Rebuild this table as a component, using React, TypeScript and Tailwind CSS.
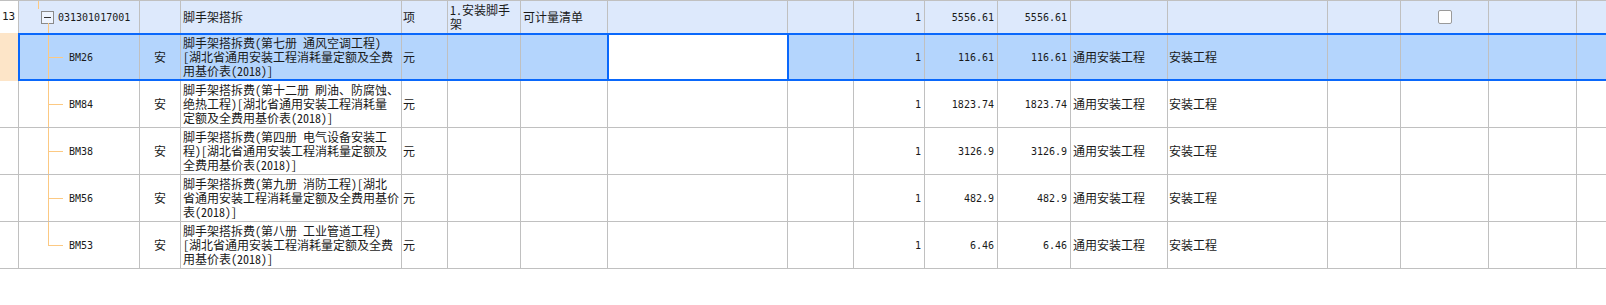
import React from 'react';

// column templates: normal rows / the selected (framed) row
const COLS =
  'grid grid-cols-[19px_121px_41px_221px_46px_73px_87px_180px_66px_71px_73px_73px_97px_160px_73px_88px_88px_1fr]';
const SEL_COLS =
  'grid grid-cols-[120px_41px_221px_46px_73px_86px_182px_65px_71px_73px_73px_97px_160px_73px_88px_88px_1fr]';

const line = 'border-r border-[#c0c0c0]';
const mono = "font-['DejaVu_Sans_Mono',monospace] text-[10px]";
const tree = 'bg-[#fcc983]';

interface Item {
  code: string;
  lines: string[];
  price: string;
}

const items: Item[] = [
  {
    code: 'BM26',
    lines: ['脚手架搭拆费(第七册 通风空调工程)', '[湖北省通用安装工程消耗量定额及全费', '用基价表(2018)]'],
    price: '116.61',
  },
  {
    code: 'BM84',
    lines: ['脚手架搭拆费(第十二册 刷油、防腐蚀、', '绝热工程)[湖北省通用安装工程消耗量', '定额及全费用基价表(2018)]'],
    price: '1823.74',
  },
  {
    code: 'BM38',
    lines: ['脚手架搭拆费(第四册 电气设备安装工', '程)[湖北省通用安装工程消耗量定额及', '全费用基价表(2018)]'],
    price: '3126.9',
  },
  {
    code: 'BM56',
    lines: ['脚手架搭拆费(第九册 消防工程)[湖北', '省通用安装工程消耗量定额及全费用基价', '表(2018)]'],
    price: '482.9',
  },
  {
    code: 'BM53',
    lines: ['脚手架搭拆费(第八册 工业管道工程)', '[湖北省通用安装工程消耗量定额及全费', '用基价表(2018)]'],
    price: '6.46',
  },
];

const Name = ({ lines }: { lines: string[] }) => (
  <div className={`${line} flex flex-col justify-center pl-[2px] leading-[14px] whitespace-nowrap overflow-hidden`}>
    {lines.map((l, i) => (
      <span key={i}>{l}</span>
    ))}
  </div>
);

const Num = ({ v }: { v: string }) => (
  <div className={`${line} ${mono} flex items-center justify-end pr-[3px]`}>{v}</div>
);

const Txt = ({ v, pl = 'pl-[2px]' }: { v?: string; pl?: string }) => (
  <div className={`${line} flex items-center ${pl} whitespace-nowrap`}>{v}</div>
);

// code cell of a child row, with the tree connector drawn in
const Code = ({ code, last, offset }: { code: string; last: boolean; offset: number }) => (
  <div className={`${line} relative flex items-center`} style={{ paddingLeft: 50 - offset }}>
    <span
      className={`absolute top-0 w-px ${tree} ${last ? 'h-1/2' : 'bottom-0'}`}
      style={{ left: 29 - offset }}
    />
    <span className={`absolute top-1/2 h-px w-[15px] ${tree}`} style={{ left: 29 - offset }} />
    <span className={mono}>{code}</span>
  </div>
);

export default function App() {
  return (
    <div className="w-[1606px] h-[305px] bg-white text-[12px] text-[#1a1a1a] font-['Noto_Sans_Mono_CJK_SC','Noto_Sans_CJK_SC','Noto_Sans_CJK_JP',sans-serif] overflow-hidden">
      {/* row 13: the parent item */}
      <div className={`${COLS} h-[33px] border-t border-[#c0c0c0] bg-[#dde9fc]`}>
        <div className={`${line} ${mono} bg-white flex items-center pl-[2px] text-[11px]`}>13</div>
        <div className={`${line} relative flex items-center pl-[22px]`}>
          <span className={`absolute left-[19px] top-0 h-[8px] w-px ${tree}`} />
          <span className={`absolute left-[29px] top-[22px] bottom-0 w-px ${tree}`} />
          <span className="w-[13px] h-[13px] border border-[#8a8a8a] bg-[#eef4fe] flex items-center justify-center">
            <span className="w-[7px] h-px bg-[#333]" />
          </span>
          <span className={`${mono} ml-[4px]`}>031301017001</span>
        </div>
        <Txt />
        <Txt v="脚手架搭拆" />
        <Txt v="项" pl="pl-[1px]" />
        <div className={`${line} flex flex-col justify-center pl-[2px] leading-[14px] whitespace-nowrap`}>
          <span>1.安装脚手</span>
          <span>架</span>
        </div>
        <Txt v="可计量清单" />
        <Txt />
        <Txt />
        <Num v="1" />
        <Num v="5556.61" />
        <Num v="5556.61" />
        <Txt />
        <Txt />
        <Txt />
        <div className={`${line} flex items-center justify-center`}>
          <span className="w-[14px] h-[14px] rounded-[2px] border border-[#9a9a9a] bg-white" />
        </div>
        <Txt />
        <div />
      </div>

      {/* selected row */}
      <div className="flex h-[48px]">
        <div className="w-[18px] bg-[#fde5c8]" />
        <div className="flex-1 border-2 border-r-0 border-[#0a68fb] bg-[#b4d5fd]">
          <div className={`${SEL_COLS} h-full`}>
            <Code code={items[0].code} last={false} offset={1} />
            <div className={`${line} flex items-center justify-center`}>安</div>
            <Name lines={items[0].lines} />
            <Txt v="元" pl="pl-[1px]" />
            <Txt />
            <div className="flex items-center pl-[2px]" />
            <div className="border-x-2 border-[#0a68fb] bg-white" />
            <Txt />
            <Num v="1" />
            <Num v={items[0].price} />
            <Num v={items[0].price} />
            <Txt v="通用安装工程" />
            <Txt v="安装工程" pl="pl-[1px]" />
            <Txt />
            <Txt />
            <Txt />
            <div />
          </div>
        </div>
      </div>

      {items.slice(1).map((it, idx) => (
        <div key={it.code} className={`${COLS} h-[47px] border-b border-[#c0c0c0]`}>
          <div className={line} />
          <Code code={it.code} last={idx === items.length - 2} offset={0} />
          <div className={`${line} flex items-center justify-center`}>安</div>
          <Name lines={it.lines} />
          <Txt v="元" pl="pl-[1px]" />
          <Txt />
          <Txt />
          <Txt />
          <Txt />
          <Num v="1" />
          <Num v={it.price} />
          <Num v={it.price} />
          <Txt v="通用安装工程" />
          <Txt v="安装工程" pl="pl-[1px]" />
          <Txt />
          <Txt />
          <Txt />
          <div />
        </div>
      ))}
    </div>
  );
}
